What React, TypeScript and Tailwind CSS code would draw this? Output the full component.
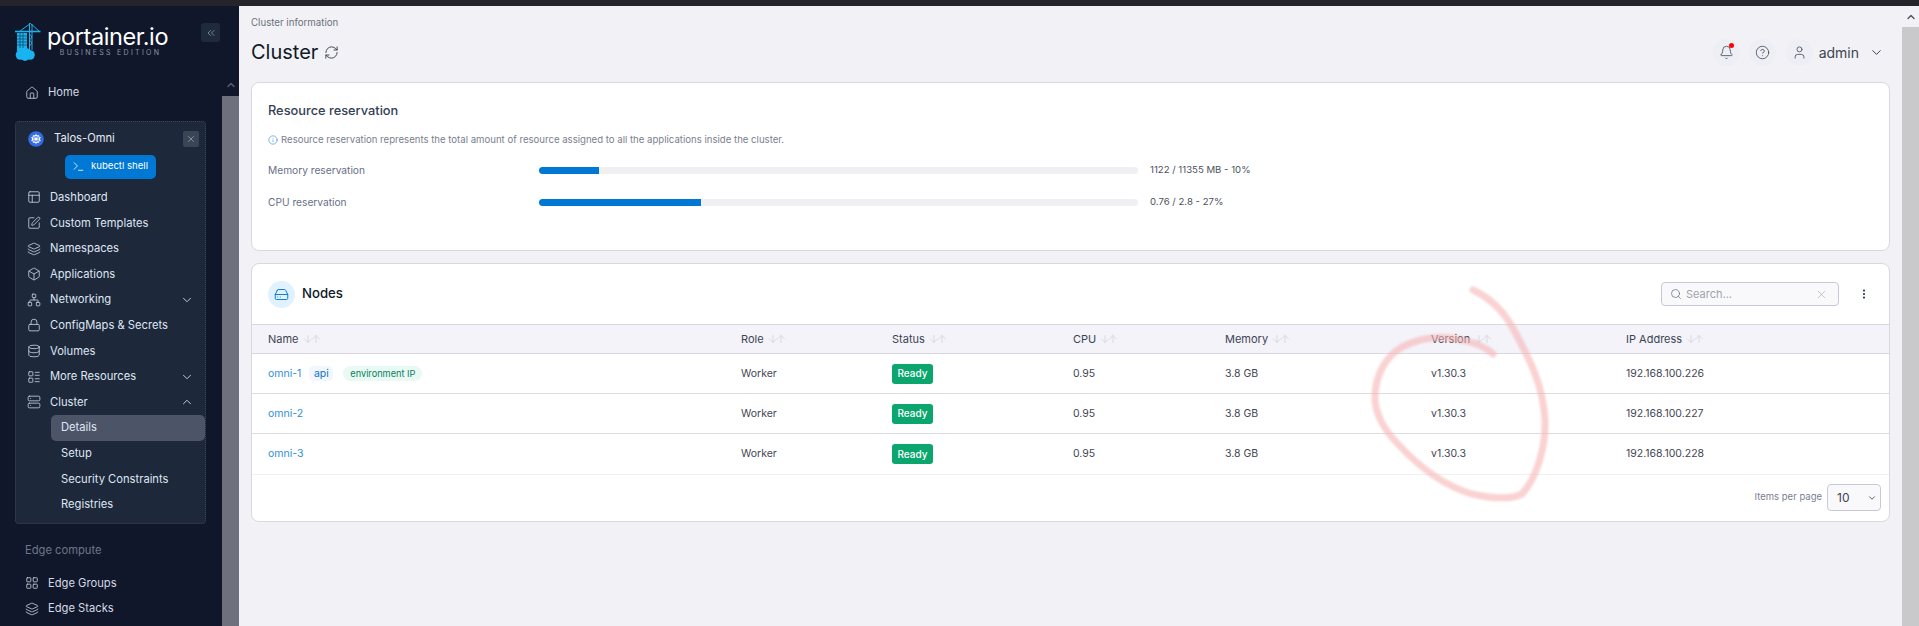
import React from "react";
import {
  Home, X, Terminal, Layout, SquarePen, Layers, Box, Network, Lock, Database, LayoutList, Server,
  ChevronDown, ChevronUp, RefreshCw, Info, Bell, CircleHelp, User, Search, MoreVertical, ChevronsLeft,
  LayoutGrid, HardDrive, ArrowDown, ArrowUp,
} from "lucide-react";

const Logo = () => (
  <svg width="26" height="38" viewBox="0 0 26 38" className="shrink-0">
    <g stroke="#19b4f0" fill="none" strokeWidth="1">
      <path d="M0 8.5H25.5" strokeWidth="1.6" />
      <path d="M14.5 0V27M17 1V27M15.5 0.5L5 8M15.5 0.5L24 8M14.5 11L17 14M17 14L14.5 17M14.5 17L17 20M17 20L14.5 23" />
    </g>
    <g fill="#19b4f0">
      <rect x="2" y="10" width="10" height="18" />
      <circle cx="5.5" cy="32" r="4.8" />
      <circle cx="11" cy="30.5" r="5.5" />
      <circle cx="15" cy="32" r="4.8" />
      <circle cx="10" cy="33.5" r="4.4" />
    </g>
    <g stroke="#10172b" strokeWidth="0.5">
      <path d="M2 13H12M2 16H12M2 19H12M2 22H12M5 10V25M8 10V25" />
    </g>
  </svg>
);

const K8s = () => (
  <svg width="16" height="16" viewBox="0 0 16 16" className="shrink-0">
    <circle cx="8" cy="8" r="7.8" fill="#326ce5" />
    <circle cx="8" cy="8" r="3.7" fill="none" stroke="#fff" strokeWidth="1" />
    <path d="M8 2.8V13.2M3 6.5L13 9.5M13 6.5L3 9.5M5 12L11 4M11 12L5 4" stroke="#fff" strokeWidth="0.7" />
    <circle cx="8" cy="8" r="1" fill="#fff" />
  </svg>
);

type NavProps = { icon: React.ElementType; label: string; chevron?: "down" | "up" };

const EnvItem = ({ icon: Icon, label, chevron }: NavProps) => (
  <div className="flex h-[25.6px] items-center pl-[11px] pr-[11px] text-[11.2px] text-[#dfe6f2]">
    <Icon size={14} strokeWidth={1.4} className="mr-[9px] shrink-0 text-[#cdd3de]" />
    <span className="flex-1 whitespace-nowrap">{label}</span>
    {chevron === "down" && <ChevronDown size={14} strokeWidth={1.6} className="text-[#cdd3de]" />}
    {chevron === "up" && <ChevronUp size={14} strokeWidth={1.6} className="text-[#cdd3de]" />}
  </div>
);

const SubItem = ({ label, active }: { label: string; active?: boolean }) => (
  <div className={`ml-[35px] flex h-[25.6px] items-center rounded-[5px] pl-[10px] text-[11.2px] text-[#dfe6f2] ${active ? "bg-[#4b5567]" : ""}`}>
    {label}
  </div>
);

const TopItem = ({ icon: Icon, label }: NavProps) => (
  <div className="flex h-[25.6px] items-center pl-[25px] text-[11.2px] text-[#d5d9e2]">
    <Icon size={14} strokeWidth={1.4} className="mr-[9px] shrink-0 text-[#cdd3de]" />
    <span>{label}</span>
  </div>
);

const Sidebar = () => (
  <aside className="flex h-full w-[239px] shrink-0 flex-col overflow-hidden bg-[#10172b]">
    <div className="flex h-[67px] shrink-0 items-start justify-between pl-[15px] pr-[19px]">
      <div className="mt-[17px] flex items-start">
        <div className="mr-[6px]"><Logo /></div>
        <div className="mt-[-1px] flex flex-col items-center">
          <span className="text-[23.5px] leading-[30px] tracking-[-0.4px] text-white">portainer.io</span>
          <span className="ml-[6px] mt-[-3px] whitespace-nowrap text-[7px] leading-[8px] tracking-[2.3px] text-[#8b93a6]">BUSINESS EDITION</span>
        </div>
      </div>
      <div className="mt-[17px] flex h-[19px] w-[19px] items-center justify-center rounded-[3px] bg-[#1f2a3e]">
        <ChevronsLeft size={12} strokeWidth={1.5} className="text-[#97a0b0]" />
      </div>
    </div>
    <div className="flex min-h-0 flex-1">
      <div className="w-[222px] shrink-0">
        <div className="pt-[7px]">
          <TopItem icon={Home} label="Home" />
        </div>
        <div className="ml-[15px] mt-[15px] w-[191px] rounded-[4px] border border-dotted border-[#3a4558] bg-[#1d283b] pb-[6px]">
          <div className="flex h-[32px] items-center pl-[12px] pr-[6px] pt-[2px]">
            <K8s />
            <span className="ml-[10px] flex-1 text-[11.2px] text-[#e6ebf3]">Talos-Omni</span>
            <div className="flex h-[16px] w-[16px] items-center justify-center rounded-[2px] bg-[#3a4556]">
              <X size={10} strokeWidth={1.5} className="text-[#aeb6c4]" />
            </div>
          </div>
          <div className="flex justify-center">
            <div className="ml-[-1px] mt-[1px] flex h-[24px] w-[91px] items-center justify-center gap-[6px] rounded-[5px] bg-[#0078d4] text-[9.6px] text-white">
              <Terminal size={13} strokeWidth={1.5} />
              <span>kubectl shell</span>
            </div>
          </div>
          <div className="mt-[6px]">
            <EnvItem icon={Layout} label="Dashboard" />
            <EnvItem icon={SquarePen} label="Custom Templates" />
            <EnvItem icon={Layers} label="Namespaces" />
            <EnvItem icon={Box} label="Applications" />
            <EnvItem icon={Network} label="Networking" chevron="down" />
            <EnvItem icon={Lock} label="ConfigMaps & Secrets" />
            <EnvItem icon={Database} label="Volumes" />
            <EnvItem icon={LayoutList} label="More Resources" chevron="down" />
            <EnvItem icon={Server} label="Cluster" chevron="up" />
            <SubItem label="Details" active />
            <SubItem label="Setup" />
            <SubItem label="Security Constraints" />
            <SubItem label="Registries" />
          </div>
        </div>
        <div className="mt-[17px] pl-[25px] text-[11.2px] leading-[18px] text-[#6f7687]">Edge compute</div>
        <div className="mt-[11px]">
          <TopItem icon={LayoutGrid} label="Edge Groups" />
          <TopItem icon={Layers} label="Edge Stacks" />
        </div>
      </div>
      <div className="flex w-[17px] shrink-0 flex-col">
        <div className="flex h-[23px] shrink-0 items-center justify-center">
          <ChevronUp size={12} strokeWidth={3} className="text-[#565c6b]" />
        </div>
        <div className="flex-1 bg-[#6f707d]" />
      </div>
    </div>
  </aside>
);

const Sort = () => (
  <span className="ml-[3px] inline-flex items-center text-[#d2d3dc]">
    <ArrowDown size={12} strokeWidth={1.6} className="-mr-[4px]" />
    <ArrowUp size={12} strokeWidth={1.6} />
  </span>
);

const columns: { label: string; w: string }[] = [
  { label: "Name", w: "w-[473px]" },
  { label: "Role", w: "w-[151px]" },
  { label: "Status", w: "w-[181px]" },
  { label: "CPU", w: "w-[152px]" },
  { label: "Memory", w: "w-[206px]" },
  { label: "Version", w: "w-[195px]" },
  { label: "IP Address", w: "flex-1" },
];

const rows = [
  { name: "omni-1", ip: "192.168.100.226", badges: true, h: "h-[40px]" },
  { name: "omni-2", ip: "192.168.100.227", badges: false, h: "h-[40px]" },
  { name: "omni-3", ip: "192.168.100.228", badges: false, h: "h-[41px]" },
];

const Nodes = () => (
  <section className="mt-[12px] h-[259px] rounded-[8px] border border-[#d9d8e0] bg-white">
    <div className="flex h-[60px] items-center pl-[16px] pr-[19px]">
      <div className="flex h-[27px] w-[27px] items-center justify-center rounded-full bg-[#e0f1ff]">
        <HardDrive size={15} strokeWidth={1.5} className="text-[#0078d4]" />
      </div>
      <span className="ml-[7px] flex-1 text-[13.2px] font-medium text-[#101828]">Nodes</span>
      <div className="flex h-[24px] w-[178px] items-center rounded-[4px] border border-[#c9c8d6] bg-[#f9f9fc] pl-[8px] pr-[10px]">
        <Search size={12} strokeWidth={1.5} className="text-[#667085]" />
        <span className="ml-[4px] flex-1 text-[11px] text-[#a0a3ad]">Search...</span>
        <X size={13} strokeWidth={1} className="text-[#9a9ca6]" />
      </div>
      <MoreVertical size={12} strokeWidth={2.5} className="ml-[19px] text-[#344054]" />
    </div>
    <div className="flex h-[30px] items-center border-y border-[#d9d8e0] bg-[#f3f3f9] pl-[16px] text-[11px] text-[#3d4452]">
      {columns.map((c) => (
        <div key={c.label} className={`flex items-center ${c.w}`}>
          <span>{c.label}</span>
          <Sort />
        </div>
      ))}
    </div>
    {rows.map((r, i) => (
      <div key={r.name} className={`flex items-center pl-[16px] text-[10.5px] text-[#3f4654] ${r.h} ${i < 2 ? "border-b border-[#dcdce1]" : "border-b border-[#f0f0f3]"}`}>
        <div className="flex w-[473px] items-center">
          <span className="text-[#2d8fdb]">{r.name}</span>
          {r.badges && (
            <>
              <span className="ml-[8px] flex h-[15px] w-[24px] items-center justify-center rounded-[5px] bg-[#f0f7ff] text-[#1570c4]">api</span>
              <span className="ml-[10px] flex h-[15px] w-[79px] items-center justify-center rounded-full bg-[#e8faf1] text-[9.2px] text-[#097d63]">environment IP</span>
            </>
          )}
        </div>
        <div className="w-[151px]">Worker</div>
        <div className="w-[181px]">
          <span className="flex h-[20px] w-[41px] items-center justify-center rounded-[3px] bg-[#0aa66d] text-[10px] font-medium text-white">Ready</span>
        </div>
        <div className="w-[152px]">0.95</div>
        <div className="w-[206px]">3.8 GB</div>
        <div className="w-[195px]">v1.30.3</div>
        <div className="flex-1">{r.ip}</div>
      </div>
    ))}
    <div className="flex items-center justify-end pr-[8px] pt-[9px]">
      <span className="mr-[5px] text-[9.5px] text-[#7a8090]">Items per page</span>
      <div className="flex h-[27px] w-[54px] items-center justify-between rounded-[4px] border border-[#c9c8d6] bg-[#f9f9fc] pl-[9px] pr-[3px] text-[12px] text-[#3d4452]">
        <span>10</span>
        <ChevronDown size={10} strokeWidth={2} />
      </div>
    </div>
  </section>
);

const Bar = ({ label, pct, value, top }: { label: string; pct: number; value: string; top: string }) => (
  <div className={`flex h-[16px] items-center ${top}`}>
    <div className="w-[271px] pt-[1px] text-[10.2px] text-[#667085]">{label}</div>
    <div className="h-[7px] w-[599px] overflow-hidden rounded-[3px] bg-[#f0f0f3]">
      <div className="h-full rounded-l-[3px] bg-[#0078d4]" style={{ width: `${pct}%` }} />
    </div>
    <div className="ml-[12px] text-[9.6px] text-[#4b5260]">{value}</div>
  </div>
);

const Main = () => (
  <main className="min-w-0 flex-1 bg-[#f2f1f5] pl-[12px] pr-[12px]">
    <div className="pt-[10px] text-[9.7px] leading-[14px] text-[#6b7280]">Cluster information</div>
    <div className="mt-[4px] flex h-[36px] items-center">
      <h1 className="text-[20px] leading-[28px] text-[#111827]">Cluster</h1>
      <RefreshCw size={15} strokeWidth={1.5} className="ml-[6px] text-[#344054]" />
      <div className="flex-1" />
      <div className="relative mr-[9px] flex h-[27px] w-[27px] items-center justify-center rounded-full bg-[#eeeff5]">
        <Bell size={15} strokeWidth={1.4} className="text-[#4b5563]" />
        <span className="absolute right-[6px] top-[4px] h-[5px] w-[5px] rounded-full bg-[#f00]" />
      </div>
      <div className="mr-[10px] flex h-[27px] w-[27px] items-center justify-center rounded-full bg-[#eeeff5]">
        <CircleHelp size={15} strokeWidth={1.4} className="text-[#4b5563]" />
      </div>
      <div className="flex h-[27px] w-[27px] items-center justify-center rounded-full bg-[#eeeff5]">
        <User size={15} strokeWidth={1.4} className="text-[#4b5563]" />
      </div>
      <span className="ml-[6px] text-[14px] text-[#3d4452]">admin</span>
      <ChevronDown size={15} strokeWidth={1.6} className="ml-[10px] mr-[6px] text-[#3d4452]" />
    </div>
    <section className="mt-[12px] h-[169px] rounded-[8px] border border-[#d9d8e0] bg-white pl-[16px] pt-[19px]">
      <h2 className="text-[12.8px] font-medium leading-[18px] text-[#344054]">Resource reservation</h2>
      <div className="mt-[13px] flex h-[14px] items-center text-[9.6px] text-[#7a8090]">
        <Info size={10} strokeWidth={1.5} className="mr-[3px] text-[#2d8fdb]" />
        <span>Resource reservation represents the total amount of resource assigned to all the applications inside the cluster.</span>
      </div>
      <Bar label="Memory reservation" pct={10} value="1122 / 11355 MB - 10%" top="mt-[15px]" />
      <Bar label="CPU reservation" pct={27} value="0.76 / 2.8 - 27%" top="mt-[16px]" />
    </section>
    <Nodes />
  </main>
);

export default function App() {
  return (
    <div className="relative flex h-[626px] w-[1919px] flex-col overflow-hidden font-['Inter',sans-serif]">
      <div className="h-[6px] shrink-0 bg-[#24242a]" />
      <div className="flex min-h-0 flex-1">
        <Sidebar />
        <Main />
        <div className="flex w-[17px] shrink-0 flex-col bg-[#f2f1f5]">
          <div className="flex h-[21px] shrink-0 items-center justify-center">
            <ChevronUp size={12} strokeWidth={3} className="text-[#565c6b]" />
          </div>
          <div className="flex-1 bg-[#c9c8cb]" />
        </div>
      </div>
      <svg className="pointer-events-none absolute left-0 top-0 blur-[1px]" width="1919" height="626" fill="none">
        <path
          d="M1473 290C1490 298 1505 312 1515 332C1530 360 1543 385 1545 420C1546 450 1535 480 1522 494C1510 500 1490 498 1472 494C1445 486 1420 468 1398 444C1382 428 1374 410 1375 395C1376 375 1385 357 1402 347C1425 335 1450 336 1470 342C1480 345 1488 349 1493 354"
          stroke="#f7b4b4"
          strokeOpacity="0.6"
          strokeWidth="7"
          strokeLinecap="round"
        />
      </svg>
    </div>
  );
}
